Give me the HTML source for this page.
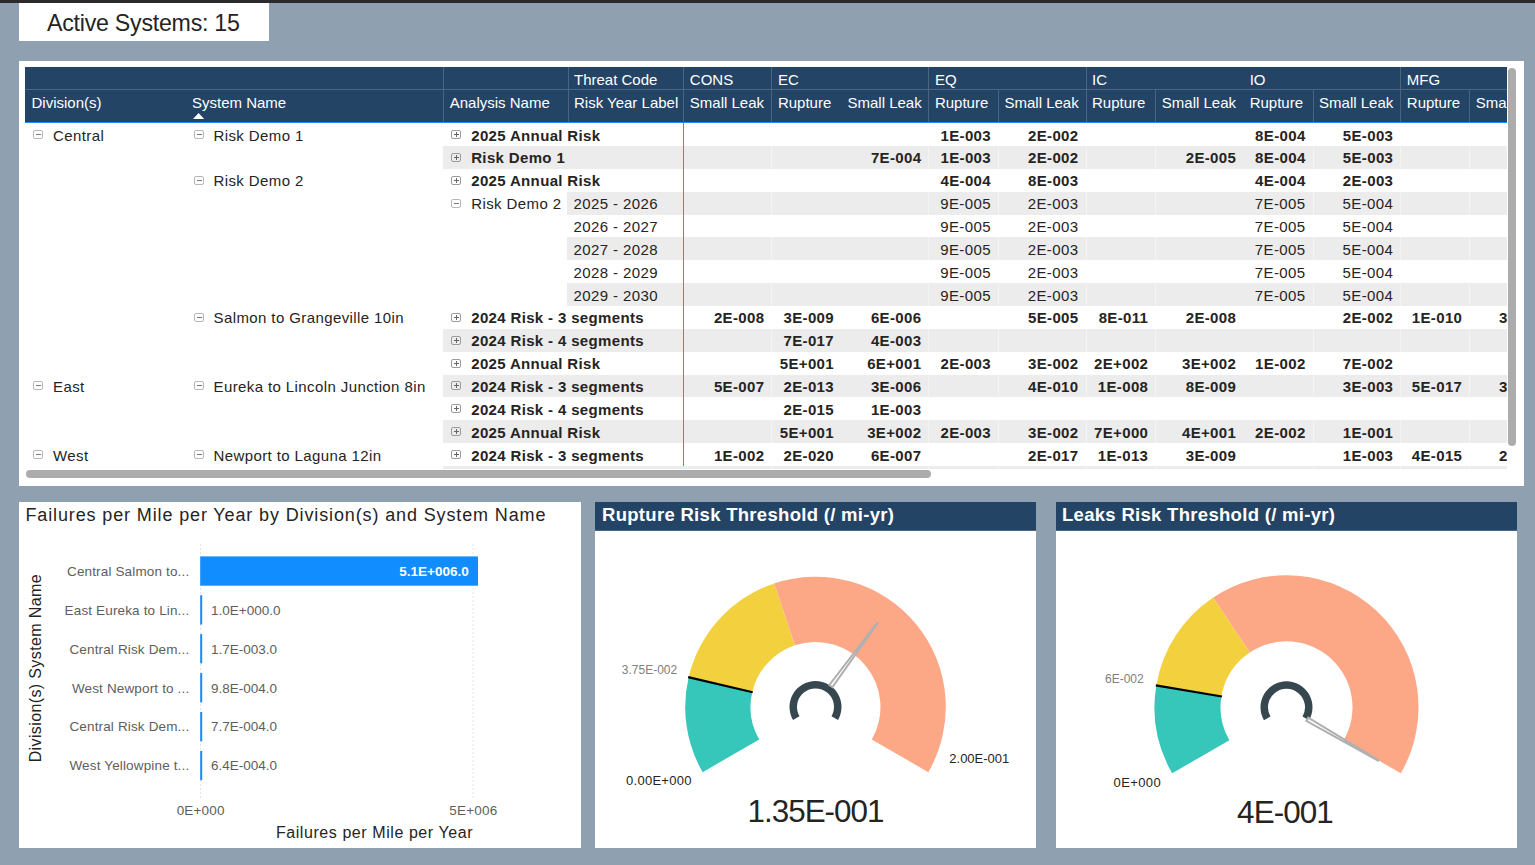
<!DOCTYPE html><html><head><meta charset="utf-8"><style>
*{margin:0;padding:0;box-sizing:border-box}
html,body{width:1535px;height:865px;overflow:hidden;background:#8fa0b0;font-family:"Liberation Sans",sans-serif}
.a{position:absolute}
.t{position:absolute;white-space:nowrap}
.hd{color:#fff;font-size:15px;line-height:22px}
.c{position:absolute;white-space:nowrap;font-size:15px;color:#252423;height:22.857px;line-height:22.857px;letter-spacing:0.4px}
.b{font-weight:bold;letter-spacing:0.35px}
.r{text-align:right}
.ic{position:absolute;width:10px;height:9px;border:1px solid #b8b8b8;border-radius:2px;background:transparent}
.ic.p{border-color:#9c9c9c}
.ic:before{content:"";position:absolute;left:1.5px;top:3px;width:5px;height:1px;background:#7a7a7a}
.ic.p:before{background:#666}
.ic.p:after{content:"";position:absolute;left:3.5px;top:1px;width:1px;height:5px;background:#666}
.band{position:absolute;background:#ececec}
</style></head><body>

<div class="a" style="left:0;top:0;width:1535px;height:3px;background:#2b2b2b"></div>
<div class="a" style="left:19px;top:3px;width:250px;height:38px;background:#fff"></div>
<div class="t" style="left:47px;top:9px;font-size:23.2px;line-height:28px;letter-spacing:-0.25px;color:#252423">Active Systems: 15</div>
<div class="a" style="left:19px;top:61px;width:1505px;height:425px;background:#fff"></div>
<div class="a" style="left:25px;top:67px;width:1482px;height:402px;overflow:hidden">
<div class="a" style="left:0;top:0;width:1482px;height:54.7px;background:#244466"></div>
<div class="a" style="left:0;top:22.2px;width:1482px;height:1px;background:#4a6482"></div>
<div class="a" style="left:0;top:54.5px;width:1482px;height:1.3px;background:#1f8fff"></div>
<div class="a" style="left:418.2px;top:0;width:1px;height:22.5px;background:#4a6482"></div>
<div class="a" style="left:542.5px;top:0;width:1px;height:22.5px;background:#4a6482"></div>
<div class="a" style="left:658.3px;top:0;width:1px;height:22.5px;background:#4a6482"></div>
<div class="a" style="left:746.4px;top:0;width:1px;height:22.5px;background:#4a6482"></div>
<div class="a" style="left:903.4px;top:0;width:1px;height:22.5px;background:#4a6482"></div>
<div class="a" style="left:1060.5px;top:0;width:1px;height:22.5px;background:#4a6482"></div>
<div class="a" style="left:1375.3px;top:0;width:1px;height:22.5px;background:#4a6482"></div>
<div class="a" style="left:418.2px;top:22.5px;width:1px;height:32px;background:#4a6482"></div>
<div class="a" style="left:542.5px;top:22.5px;width:1px;height:32px;background:#4a6482"></div>
<div class="a" style="left:658.3px;top:22.5px;width:1px;height:32px;background:#4a6482"></div>
<div class="a" style="left:746.4px;top:22.5px;width:1px;height:32px;background:#4a6482"></div>
<div class="a" style="left:903.4px;top:22.5px;width:1px;height:32px;background:#4a6482"></div>
<div class="a" style="left:973.0px;top:22.5px;width:1px;height:32px;background:#4a6482"></div>
<div class="a" style="left:1060.5px;top:22.5px;width:1px;height:32px;background:#4a6482"></div>
<div class="a" style="left:1130.3px;top:22.5px;width:1px;height:32px;background:#4a6482"></div>
<div class="a" style="left:1287.6px;top:22.5px;width:1px;height:32px;background:#4a6482"></div>
<div class="a" style="left:1375.3px;top:22.5px;width:1px;height:32px;background:#4a6482"></div>
<div class="a" style="left:1444.3px;top:22.5px;width:1px;height:32px;background:#4a6482"></div>
<div class="t hd" style="left:549.0px;top:2.0px">Threat Code</div>
<div class="t hd" style="left:664.8px;top:2.0px">CONS</div>
<div class="t hd" style="left:752.9px;top:2.0px">EC</div>
<div class="t hd" style="left:909.9px;top:2.0px">EQ</div>
<div class="t hd" style="left:1067.0px;top:2.0px">IC</div>
<div class="t hd" style="left:1224.7px;top:2.0px">IO</div>
<div class="t hd" style="left:1381.8px;top:2.0px">MFG</div>
<div class="t hd" style="left:6.5px;top:24.5px">Division(s)</div>
<div class="t hd" style="left:167.0px;top:24.5px">System Name</div>
<div class="t hd" style="left:424.7px;top:24.5px">Analysis Name</div>
<div class="t hd" style="left:549.0px;top:24.5px">Risk Year Label</div>
<div class="t hd" style="left:664.8px;top:24.5px">Small Leak</div>
<div class="t hd" style="left:752.9px;top:24.5px">Rupture</div>
<div class="t hd" style="left:822.5px;top:24.5px">Small Leak</div>
<div class="t hd" style="left:909.9px;top:24.5px">Rupture</div>
<div class="t hd" style="left:979.5px;top:24.5px">Small Leak</div>
<div class="t hd" style="left:1067.0px;top:24.5px">Rupture</div>
<div class="t hd" style="left:1136.8px;top:24.5px">Small Leak</div>
<div class="t hd" style="left:1224.7px;top:24.5px">Rupture</div>
<div class="t hd" style="left:1294.1px;top:24.5px">Small Leak</div>
<div class="t hd" style="left:1381.8px;top:24.5px">Rupture</div>
<div class="t hd" style="left:1450.8px;top:24.5px">Small Leak</div>
<svg class="a" style="left:167.5px;top:45.7px" width="12" height="7"><polygon points="0,6 5.6,0 11.2,6" fill="#fff"/></svg>
<div class="ic " style="left:8px;top:63px"></div>
<div class="c " style="left:28.0px;top:57.50px">Central</div>
<div class="ic " style="left:169px;top:63px"></div>
<div class="c " style="left:188.5px;top:57.50px">Risk Demo 1</div>
<div class="ic p" style="left:426px;top:63px"></div>
<div class="c b" style="left:446.2px;top:57.50px">2025 Annual Risk</div>
<div class="c r b" style="left:866.0px;top:57.50px;width:100px">1E-003</div>
<div class="c r b" style="left:953.5px;top:57.50px;width:100px">2E-002</div>
<div class="c r b" style="left:1180.6px;top:57.50px;width:100px">8E-004</div>
<div class="c r b" style="left:1268.3px;top:57.50px;width:100px">5E-003</div>
<div class="band" style="left:418.4px;top:78.96px;width:1063.6px;height:22.857px"></div>
<div class="a" style="left:746.4px;top:78.96px;width:1px;height:22.857px;background:#f4f4f4"></div>
<div class="a" style="left:903.4px;top:78.96px;width:1px;height:22.857px;background:#f4f4f4"></div>
<div class="a" style="left:973.0px;top:78.96px;width:1px;height:22.857px;background:#f4f4f4"></div>
<div class="a" style="left:1060.5px;top:78.96px;width:1px;height:22.857px;background:#f4f4f4"></div>
<div class="a" style="left:1130.3px;top:78.96px;width:1px;height:22.857px;background:#f4f4f4"></div>
<div class="a" style="left:1287.6px;top:78.96px;width:1px;height:22.857px;background:#f4f4f4"></div>
<div class="a" style="left:1375.3px;top:78.96px;width:1px;height:22.857px;background:#f4f4f4"></div>
<div class="a" style="left:1444.3px;top:78.96px;width:1px;height:22.857px;background:#f4f4f4"></div>
<div class="ic p" style="left:426px;top:86px"></div>
<div class="c b" style="left:446.2px;top:80.36px">Risk Demo 1</div>
<div class="c r b" style="left:796.4px;top:80.36px;width:100px">7E-004</div>
<div class="c r b" style="left:866.0px;top:80.36px;width:100px">1E-003</div>
<div class="c r b" style="left:953.5px;top:80.36px;width:100px">2E-002</div>
<div class="c r b" style="left:1111.2px;top:80.36px;width:100px">2E-005</div>
<div class="c r b" style="left:1180.6px;top:80.36px;width:100px">8E-004</div>
<div class="c r b" style="left:1268.3px;top:80.36px;width:100px">5E-003</div>
<div class="ic " style="left:169px;top:109px"></div>
<div class="c " style="left:188.5px;top:103.21px">Risk Demo 2</div>
<div class="ic p" style="left:426px;top:109px"></div>
<div class="c b" style="left:446.2px;top:103.21px">2025 Annual Risk</div>
<div class="c r b" style="left:866.0px;top:103.21px;width:100px">4E-004</div>
<div class="c r b" style="left:953.5px;top:103.21px;width:100px">8E-003</div>
<div class="c r b" style="left:1180.6px;top:103.21px;width:100px">4E-004</div>
<div class="c r b" style="left:1268.3px;top:103.21px;width:100px">2E-003</div>
<div class="band" style="left:542.1px;top:124.67px;width:939.9px;height:22.857px"></div>
<div class="a" style="left:746.4px;top:124.67px;width:1px;height:22.857px;background:#f4f4f4"></div>
<div class="a" style="left:903.4px;top:124.67px;width:1px;height:22.857px;background:#f4f4f4"></div>
<div class="a" style="left:973.0px;top:124.67px;width:1px;height:22.857px;background:#f4f4f4"></div>
<div class="a" style="left:1060.5px;top:124.67px;width:1px;height:22.857px;background:#f4f4f4"></div>
<div class="a" style="left:1130.3px;top:124.67px;width:1px;height:22.857px;background:#f4f4f4"></div>
<div class="a" style="left:1287.6px;top:124.67px;width:1px;height:22.857px;background:#f4f4f4"></div>
<div class="a" style="left:1375.3px;top:124.67px;width:1px;height:22.857px;background:#f4f4f4"></div>
<div class="a" style="left:1444.3px;top:124.67px;width:1px;height:22.857px;background:#f4f4f4"></div>
<div class="ic " style="left:426px;top:132px"></div>
<div class="c " style="left:446.2px;top:126.07px">Risk Demo 2</div>
<div class="c " style="left:548.5px;top:126.07px">2025 - 2026</div>
<div class="c r " style="left:866.0px;top:126.07px;width:100px">9E-005</div>
<div class="c r " style="left:953.5px;top:126.07px;width:100px">2E-003</div>
<div class="c r " style="left:1180.6px;top:126.07px;width:100px">7E-005</div>
<div class="c r " style="left:1268.3px;top:126.07px;width:100px">5E-004</div>
<div class="c " style="left:548.5px;top:148.93px">2026 - 2027</div>
<div class="c r " style="left:866.0px;top:148.93px;width:100px">9E-005</div>
<div class="c r " style="left:953.5px;top:148.93px;width:100px">2E-003</div>
<div class="c r " style="left:1180.6px;top:148.93px;width:100px">7E-005</div>
<div class="c r " style="left:1268.3px;top:148.93px;width:100px">5E-004</div>
<div class="band" style="left:542.1px;top:170.38px;width:939.9px;height:22.857px"></div>
<div class="a" style="left:746.4px;top:170.38px;width:1px;height:22.857px;background:#f4f4f4"></div>
<div class="a" style="left:903.4px;top:170.38px;width:1px;height:22.857px;background:#f4f4f4"></div>
<div class="a" style="left:973.0px;top:170.38px;width:1px;height:22.857px;background:#f4f4f4"></div>
<div class="a" style="left:1060.5px;top:170.38px;width:1px;height:22.857px;background:#f4f4f4"></div>
<div class="a" style="left:1130.3px;top:170.38px;width:1px;height:22.857px;background:#f4f4f4"></div>
<div class="a" style="left:1287.6px;top:170.38px;width:1px;height:22.857px;background:#f4f4f4"></div>
<div class="a" style="left:1375.3px;top:170.38px;width:1px;height:22.857px;background:#f4f4f4"></div>
<div class="a" style="left:1444.3px;top:170.38px;width:1px;height:22.857px;background:#f4f4f4"></div>
<div class="c " style="left:548.5px;top:171.78px">2027 - 2028</div>
<div class="c r " style="left:866.0px;top:171.78px;width:100px">9E-005</div>
<div class="c r " style="left:953.5px;top:171.78px;width:100px">2E-003</div>
<div class="c r " style="left:1180.6px;top:171.78px;width:100px">7E-005</div>
<div class="c r " style="left:1268.3px;top:171.78px;width:100px">5E-004</div>
<div class="c " style="left:548.5px;top:194.64px">2028 - 2029</div>
<div class="c r " style="left:866.0px;top:194.64px;width:100px">9E-005</div>
<div class="c r " style="left:953.5px;top:194.64px;width:100px">2E-003</div>
<div class="c r " style="left:1180.6px;top:194.64px;width:100px">7E-005</div>
<div class="c r " style="left:1268.3px;top:194.64px;width:100px">5E-004</div>
<div class="band" style="left:542.1px;top:216.10px;width:939.9px;height:22.857px"></div>
<div class="a" style="left:746.4px;top:216.10px;width:1px;height:22.857px;background:#f4f4f4"></div>
<div class="a" style="left:903.4px;top:216.10px;width:1px;height:22.857px;background:#f4f4f4"></div>
<div class="a" style="left:973.0px;top:216.10px;width:1px;height:22.857px;background:#f4f4f4"></div>
<div class="a" style="left:1060.5px;top:216.10px;width:1px;height:22.857px;background:#f4f4f4"></div>
<div class="a" style="left:1130.3px;top:216.10px;width:1px;height:22.857px;background:#f4f4f4"></div>
<div class="a" style="left:1287.6px;top:216.10px;width:1px;height:22.857px;background:#f4f4f4"></div>
<div class="a" style="left:1375.3px;top:216.10px;width:1px;height:22.857px;background:#f4f4f4"></div>
<div class="a" style="left:1444.3px;top:216.10px;width:1px;height:22.857px;background:#f4f4f4"></div>
<div class="c " style="left:548.5px;top:217.50px">2029 - 2030</div>
<div class="c r " style="left:866.0px;top:217.50px;width:100px">9E-005</div>
<div class="c r " style="left:953.5px;top:217.50px;width:100px">2E-003</div>
<div class="c r " style="left:1180.6px;top:217.50px;width:100px">7E-005</div>
<div class="c r " style="left:1268.3px;top:217.50px;width:100px">5E-004</div>
<div class="ic " style="left:169px;top:246px"></div>
<div class="c " style="left:188.5px;top:240.36px">Salmon to Grangeville 10in</div>
<div class="ic p" style="left:426px;top:246px"></div>
<div class="c b" style="left:446.2px;top:240.36px">2024 Risk - 3 segments</div>
<div class="c r b" style="left:639.4px;top:240.36px;width:100px">2E-008</div>
<div class="c r b" style="left:709.0px;top:240.36px;width:100px">3E-009</div>
<div class="c r b" style="left:796.4px;top:240.36px;width:100px">6E-006</div>
<div class="c r b" style="left:953.5px;top:240.36px;width:100px">5E-005</div>
<div class="c r b" style="left:1023.3px;top:240.36px;width:100px">8E-011</div>
<div class="c r b" style="left:1111.2px;top:240.36px;width:100px">2E-008</div>
<div class="c r b" style="left:1268.3px;top:240.36px;width:100px">2E-002</div>
<div class="c r b" style="left:1337.3px;top:240.36px;width:100px">1E-010</div>
<div class="c r b" style="left:1424.6px;top:240.36px;width:100px">3E-008</div>
<div class="band" style="left:418.4px;top:261.81px;width:1063.6px;height:22.857px"></div>
<div class="a" style="left:746.4px;top:261.81px;width:1px;height:22.857px;background:#f4f4f4"></div>
<div class="a" style="left:903.4px;top:261.81px;width:1px;height:22.857px;background:#f4f4f4"></div>
<div class="a" style="left:973.0px;top:261.81px;width:1px;height:22.857px;background:#f4f4f4"></div>
<div class="a" style="left:1060.5px;top:261.81px;width:1px;height:22.857px;background:#f4f4f4"></div>
<div class="a" style="left:1130.3px;top:261.81px;width:1px;height:22.857px;background:#f4f4f4"></div>
<div class="a" style="left:1287.6px;top:261.81px;width:1px;height:22.857px;background:#f4f4f4"></div>
<div class="a" style="left:1375.3px;top:261.81px;width:1px;height:22.857px;background:#f4f4f4"></div>
<div class="a" style="left:1444.3px;top:261.81px;width:1px;height:22.857px;background:#f4f4f4"></div>
<div class="ic p" style="left:426px;top:269px"></div>
<div class="c b" style="left:446.2px;top:263.21px">2024 Risk - 4 segments</div>
<div class="c r b" style="left:709.0px;top:263.21px;width:100px">7E-017</div>
<div class="c r b" style="left:796.4px;top:263.21px;width:100px">4E-003</div>
<div class="ic p" style="left:426px;top:292px"></div>
<div class="c b" style="left:446.2px;top:286.07px">2025 Annual Risk</div>
<div class="c r b" style="left:709.0px;top:286.07px;width:100px">5E+001</div>
<div class="c r b" style="left:796.4px;top:286.07px;width:100px">6E+001</div>
<div class="c r b" style="left:866.0px;top:286.07px;width:100px">2E-003</div>
<div class="c r b" style="left:953.5px;top:286.07px;width:100px">3E-002</div>
<div class="c r b" style="left:1023.3px;top:286.07px;width:100px">2E+002</div>
<div class="c r b" style="left:1111.2px;top:286.07px;width:100px">3E+002</div>
<div class="c r b" style="left:1180.6px;top:286.07px;width:100px">1E-002</div>
<div class="c r b" style="left:1268.3px;top:286.07px;width:100px">7E-002</div>
<div class="band" style="left:418.4px;top:307.53px;width:1063.6px;height:22.857px"></div>
<div class="a" style="left:746.4px;top:307.53px;width:1px;height:22.857px;background:#f4f4f4"></div>
<div class="a" style="left:903.4px;top:307.53px;width:1px;height:22.857px;background:#f4f4f4"></div>
<div class="a" style="left:973.0px;top:307.53px;width:1px;height:22.857px;background:#f4f4f4"></div>
<div class="a" style="left:1060.5px;top:307.53px;width:1px;height:22.857px;background:#f4f4f4"></div>
<div class="a" style="left:1130.3px;top:307.53px;width:1px;height:22.857px;background:#f4f4f4"></div>
<div class="a" style="left:1287.6px;top:307.53px;width:1px;height:22.857px;background:#f4f4f4"></div>
<div class="a" style="left:1375.3px;top:307.53px;width:1px;height:22.857px;background:#f4f4f4"></div>
<div class="a" style="left:1444.3px;top:307.53px;width:1px;height:22.857px;background:#f4f4f4"></div>
<div class="ic " style="left:8px;top:314px"></div>
<div class="c " style="left:28.0px;top:308.93px">East</div>
<div class="ic " style="left:169px;top:314px"></div>
<div class="c " style="left:188.5px;top:308.93px">Eureka to Lincoln Junction 8in</div>
<div class="ic p" style="left:426px;top:314px"></div>
<div class="c b" style="left:446.2px;top:308.93px">2024 Risk - 3 segments</div>
<div class="c r b" style="left:639.4px;top:308.93px;width:100px">5E-007</div>
<div class="c r b" style="left:709.0px;top:308.93px;width:100px">2E-013</div>
<div class="c r b" style="left:796.4px;top:308.93px;width:100px">3E-006</div>
<div class="c r b" style="left:953.5px;top:308.93px;width:100px">4E-010</div>
<div class="c r b" style="left:1023.3px;top:308.93px;width:100px">1E-008</div>
<div class="c r b" style="left:1111.2px;top:308.93px;width:100px">8E-009</div>
<div class="c r b" style="left:1268.3px;top:308.93px;width:100px">3E-003</div>
<div class="c r b" style="left:1337.3px;top:308.93px;width:100px">5E-017</div>
<div class="c r b" style="left:1424.6px;top:308.93px;width:100px">3E-008</div>
<div class="ic p" style="left:426px;top:337px"></div>
<div class="c b" style="left:446.2px;top:331.78px">2024 Risk - 4 segments</div>
<div class="c r b" style="left:709.0px;top:331.78px;width:100px">2E-015</div>
<div class="c r b" style="left:796.4px;top:331.78px;width:100px">1E-003</div>
<div class="band" style="left:418.4px;top:353.24px;width:1063.6px;height:22.857px"></div>
<div class="a" style="left:746.4px;top:353.24px;width:1px;height:22.857px;background:#f4f4f4"></div>
<div class="a" style="left:903.4px;top:353.24px;width:1px;height:22.857px;background:#f4f4f4"></div>
<div class="a" style="left:973.0px;top:353.24px;width:1px;height:22.857px;background:#f4f4f4"></div>
<div class="a" style="left:1060.5px;top:353.24px;width:1px;height:22.857px;background:#f4f4f4"></div>
<div class="a" style="left:1130.3px;top:353.24px;width:1px;height:22.857px;background:#f4f4f4"></div>
<div class="a" style="left:1287.6px;top:353.24px;width:1px;height:22.857px;background:#f4f4f4"></div>
<div class="a" style="left:1375.3px;top:353.24px;width:1px;height:22.857px;background:#f4f4f4"></div>
<div class="a" style="left:1444.3px;top:353.24px;width:1px;height:22.857px;background:#f4f4f4"></div>
<div class="ic p" style="left:426px;top:360px"></div>
<div class="c b" style="left:446.2px;top:354.64px">2025 Annual Risk</div>
<div class="c r b" style="left:709.0px;top:354.64px;width:100px">5E+001</div>
<div class="c r b" style="left:796.4px;top:354.64px;width:100px">3E+002</div>
<div class="c r b" style="left:866.0px;top:354.64px;width:100px">2E-003</div>
<div class="c r b" style="left:953.5px;top:354.64px;width:100px">3E-002</div>
<div class="c r b" style="left:1023.3px;top:354.64px;width:100px">7E+000</div>
<div class="c r b" style="left:1111.2px;top:354.64px;width:100px">4E+001</div>
<div class="c r b" style="left:1180.6px;top:354.64px;width:100px">2E-002</div>
<div class="c r b" style="left:1268.3px;top:354.64px;width:100px">1E-001</div>
<div class="ic " style="left:8px;top:383px"></div>
<div class="c " style="left:28.0px;top:377.50px">West</div>
<div class="ic " style="left:169px;top:383px"></div>
<div class="c " style="left:188.5px;top:377.50px">Newport to Laguna 12in</div>
<div class="ic p" style="left:426px;top:383px"></div>
<div class="c b" style="left:446.2px;top:377.50px">2024 Risk - 3 segments</div>
<div class="c r b" style="left:639.4px;top:377.50px;width:100px">1E-002</div>
<div class="c r b" style="left:709.0px;top:377.50px;width:100px">2E-020</div>
<div class="c r b" style="left:796.4px;top:377.50px;width:100px">6E-007</div>
<div class="c r b" style="left:953.5px;top:377.50px;width:100px">2E-017</div>
<div class="c r b" style="left:1023.3px;top:377.50px;width:100px">1E-013</div>
<div class="c r b" style="left:1111.2px;top:377.50px;width:100px">3E-009</div>
<div class="c r b" style="left:1268.3px;top:377.50px;width:100px">1E-003</div>
<div class="c r b" style="left:1337.3px;top:377.50px;width:100px">4E-015</div>
<div class="c r b" style="left:1424.6px;top:377.50px;width:100px">2E-008</div>
<div class="band" style="left:418.4px;top:398.96px;width:1063.6px;height:22.857px"></div>
<div class="a" style="left:746.4px;top:398.96px;width:1px;height:22.857px;background:#f4f4f4"></div>
<div class="a" style="left:903.4px;top:398.96px;width:1px;height:22.857px;background:#f4f4f4"></div>
<div class="a" style="left:973.0px;top:398.96px;width:1px;height:22.857px;background:#f4f4f4"></div>
<div class="a" style="left:1060.5px;top:398.96px;width:1px;height:22.857px;background:#f4f4f4"></div>
<div class="a" style="left:1130.3px;top:398.96px;width:1px;height:22.857px;background:#f4f4f4"></div>
<div class="a" style="left:1287.6px;top:398.96px;width:1px;height:22.857px;background:#f4f4f4"></div>
<div class="a" style="left:1375.3px;top:398.96px;width:1px;height:22.857px;background:#f4f4f4"></div>
<div class="a" style="left:1444.3px;top:398.96px;width:1px;height:22.857px;background:#f4f4f4"></div>
<div class="ic p" style="left:426px;top:406px"></div>
<div class="c b" style="left:446.2px;top:400.36px">2024 Risk - 4 segments</div>
<div class="a" style="left:658.0px;top:56.0px;width:1.2px;height:343.0px;background:#3d93ea"></div>
</div>
<div class="a" style="left:26px;top:470.2px;width:905px;height:8.2px;border-radius:4px;background:#acacac"></div>
<div class="a" style="left:1508px;top:68px;width:8px;height:378px;border-radius:4px;background:#acacac"></div>
<svg class="a" style="left:0;top:0" width="1535" height="865" viewBox="0 0 1535 865" font-family="Liberation Sans, sans-serif"><rect x="19" y="502" width="562" height="346" fill="#fff"/><rect x="595" y="502" width="441" height="346" fill="#fff"/><rect x="595" y="502" width="441" height="28.8" fill="#244466"/><rect x="1056" y="502" width="461" height="346" fill="#fff"/><rect x="1056" y="502" width="461" height="28.8" fill="#244466"/><text x="25.5" y="521.0" font-size="18.00" fill="#252423" text-anchor="start" font-weight="normal" letter-spacing="0.87" >Failures per Mile per Year by Division(s) and System Name</text><text x="602.0" y="521.0" font-size="18.50" fill="#fff" text-anchor="start" font-weight="bold" letter-spacing="0.30" >Rupture Risk Threshold (/ mi-yr)</text><text x="1062.0" y="521.0" font-size="18.50" fill="#fff" text-anchor="start" font-weight="bold" letter-spacing="0.30" >Leaks Risk Threshold (/ mi-yr)</text><line x1="200.5" y1="544.5" x2="200.5" y2="797.5" stroke="#c8c8c8" stroke-width="1" stroke-dasharray="1,3"/><line x1="473.1" y1="544.5" x2="473.1" y2="797.5" stroke="#c8c8c8" stroke-width="1" stroke-dasharray="1,3"/><text x="189.3" y="575.8" font-size="13.50" fill="#605e5c" text-anchor="end" font-weight="normal" letter-spacing="0.15" >Central Salmon to...</text><rect x="200.2" y="556.4" width="277.8" height="29.3" fill="#118dff"/><text x="468.7" y="575.8" font-size="13.50" fill="#fff" text-anchor="end" font-weight="bold" letter-spacing="0.00" >5.1E+006.0</text><text x="189.3" y="614.7" font-size="13.50" fill="#605e5c" text-anchor="end" font-weight="normal" letter-spacing="0.15" >East Eureka to Lin...</text><rect x="200.2" y="595.2" width="2" height="29.3" fill="#118dff"/><text x="211.0" y="614.7" font-size="13.50" fill="#605e5c" text-anchor="start" font-weight="normal" letter-spacing="0.00" >1.0E+000.0</text><text x="189.3" y="653.6" font-size="13.50" fill="#605e5c" text-anchor="end" font-weight="normal" letter-spacing="0.15" >Central Risk Dem...</text><rect x="200.2" y="634.1" width="2" height="29.3" fill="#118dff"/><text x="211.0" y="653.6" font-size="13.50" fill="#605e5c" text-anchor="start" font-weight="normal" letter-spacing="0.00" >1.7E-003.0</text><text x="189.3" y="692.5" font-size="13.50" fill="#605e5c" text-anchor="end" font-weight="normal" letter-spacing="0.15" >West Newport to ...</text><rect x="200.2" y="673.1" width="2" height="29.3" fill="#118dff"/><text x="211.0" y="692.5" font-size="13.50" fill="#605e5c" text-anchor="start" font-weight="normal" letter-spacing="0.00" >9.8E-004.0</text><text x="189.3" y="731.4" font-size="13.50" fill="#605e5c" text-anchor="end" font-weight="normal" letter-spacing="0.15" >Central Risk Dem...</text><rect x="200.2" y="712.0" width="2" height="29.3" fill="#118dff"/><text x="211.0" y="731.4" font-size="13.50" fill="#605e5c" text-anchor="start" font-weight="normal" letter-spacing="0.00" >7.7E-004.0</text><text x="189.3" y="770.3" font-size="13.50" fill="#605e5c" text-anchor="end" font-weight="normal" letter-spacing="0.15" >West Yellowpine t...</text><rect x="200.2" y="750.9" width="2" height="29.3" fill="#118dff"/><text x="211.0" y="770.3" font-size="13.50" fill="#605e5c" text-anchor="start" font-weight="normal" letter-spacing="0.00" >6.4E-004.0</text><text x="200.7" y="815.4" font-size="13.50" fill="#605e5c" text-anchor="middle" font-weight="normal" letter-spacing="0.20" >0E+000</text><text x="473.3" y="815.4" font-size="13.50" fill="#605e5c" text-anchor="middle" font-weight="normal" letter-spacing="0.20" >5E+006</text><text x="374.5" y="837.8" font-size="16.00" fill="#252423" text-anchor="middle" font-weight="normal" letter-spacing="0.57" >Failures per Mile per Year</text><text x="0" y="0" font-size="16" fill="#252423" text-anchor="middle" letter-spacing="0.38" transform="translate(40.6,668.2) rotate(-90)">Division(s) System Name</text><path d="M702.66,772.15 A130.30,130.30 0 0,1 688.64,677.25 L752.22,692.16 A65.00,65.00 0 0,0 759.21,739.50 Z" fill="#36c6ba"/><path d="M688.64,677.25 A130.30,130.30 0 0,1 774.16,583.43 L794.88,645.36 A65.00,65.00 0 0,0 752.22,692.16 Z" fill="#f3d03e"/><path d="M774.16,583.43 A130.30,130.30 0 0,1 928.34,772.15 L871.79,739.50 A65.00,65.00 0 0,0 794.88,645.36 Z" fill="#fca886"/><line x1="688.16" y1="677.13" x2="752.70" y2="692.27" stroke="#000" stroke-width="2.2"/><path d="M792.98,720.00 A26.00,26.00 0 1,1 838.02,720.00 L831.52,716.25 A18.50,18.50 0 1,0 799.48,716.25 Z" fill="#37474f"/><polygon points="829.40,684.95 876.97,623.11 877.46,623.47 832.46,687.20" fill="#fff" stroke="#b0b0b0" stroke-width="2.0" stroke-linejoin="miter"/><path d="M1172.18,773.30 A132.00,132.00 0 0,1 1156.31,685.51 L1221.41,696.41 A66.00,66.00 0 0,0 1229.34,740.30 Z" fill="#36c6ba"/><path d="M1156.31,685.51 A132.00,132.00 0 0,1 1213.26,597.48 L1249.88,652.39 A66.00,66.00 0 0,0 1221.41,696.41 Z" fill="#f3d03e"/><path d="M1213.26,597.48 A132.00,132.00 0 0,1 1400.82,773.30 L1343.66,740.30 A66.00,66.00 0 0,0 1249.88,652.39 Z" fill="#fca886"/><line x1="1155.82" y1="685.43" x2="1221.90" y2="696.49" stroke="#000" stroke-width="2.2"/><path d="M1263.98,720.30 A26.00,26.00 0 1,1 1309.02,720.30 L1302.52,716.55 A18.50,18.50 0 1,0 1270.48,716.55 Z" fill="#37474f"/><polygon points="1308.22,717.69 1378.36,760.20 1378.06,760.72 1306.31,720.98" fill="#fff" stroke="#b0b0b0" stroke-width="2.0" stroke-linejoin="miter"/><text x="621.8" y="673.8" font-size="12.00" fill="#808080" text-anchor="start" font-weight="normal" letter-spacing="0.00" >3.75E-002</text><text x="626.0" y="785.4" font-size="13.00" fill="#252423" text-anchor="start" font-weight="normal" letter-spacing="0.28" >0.00E+000</text><text x="949.3" y="763.1" font-size="13.00" fill="#252423" text-anchor="start" font-weight="normal" letter-spacing="0.00" >2.00E-001</text><text x="815.5" y="822.1" font-size="31.40" fill="#252423" text-anchor="middle" font-weight="normal" letter-spacing="-1.00" >1.35E-001</text><text x="1105.0" y="682.9" font-size="12.00" fill="#808080" text-anchor="start" font-weight="normal" letter-spacing="0.00" >6E-002</text><text x="1113.5" y="786.6" font-size="13.00" fill="#252423" text-anchor="start" font-weight="normal" letter-spacing="0.40" >0E+000</text><text x="1285.0" y="823.4" font-size="31.40" fill="#252423" text-anchor="middle" font-weight="normal" letter-spacing="-0.90" >4E-001</text></svg>
</body></html>
